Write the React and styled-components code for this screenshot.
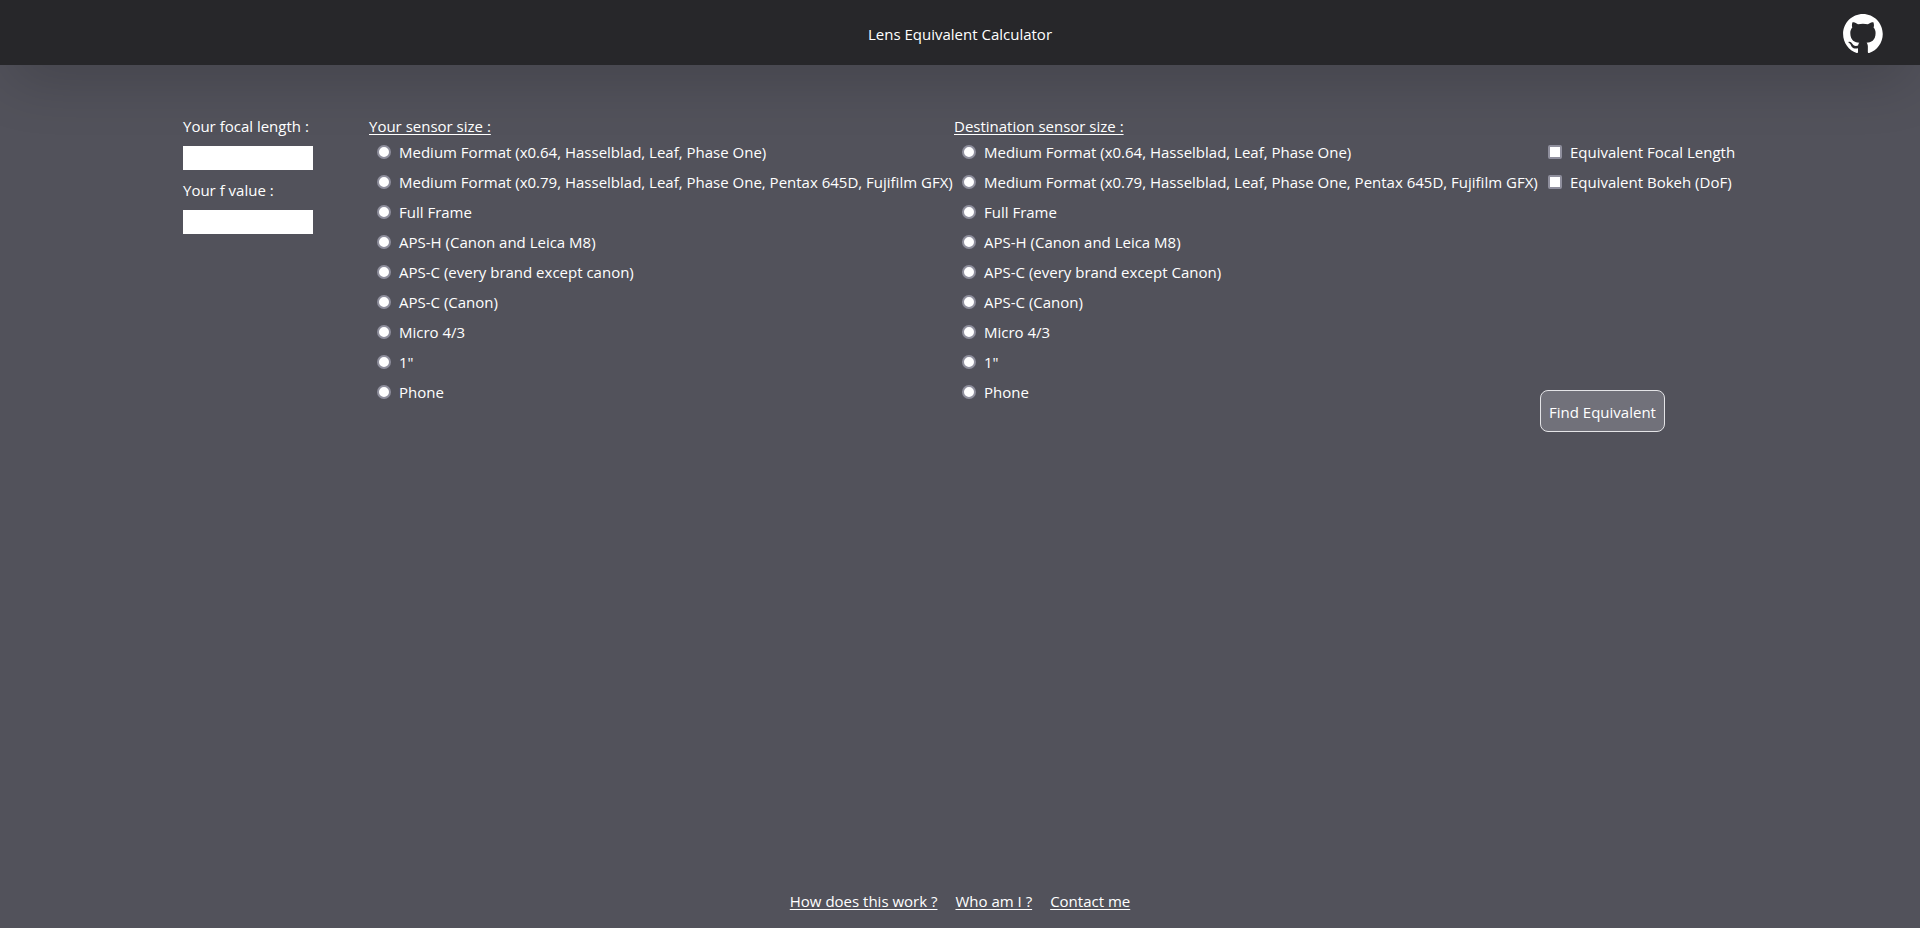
import React from "react";
import styled, { createGlobalStyle } from "styled-components";

const GlobalStyle = createGlobalStyle`
  *, *::before, *::after { box-sizing: border-box; }
  body {
    margin: 0;
    background: #52525b;
    color: #ffffff;
    font-family: "Segoe UI", "Open Sans", "Noto Sans", sans-serif;
    font-size: 15px;
    line-height: 24px;
  }
`;

const Page = styled.div`
  display: flex;
  flex-direction: column;
  min-height: 100vh;
`;

const Header = styled.header`
  display: grid;
  grid-template-columns: 1fr auto 1fr;
  align-items: center;
  height: 65px;
  padding: 2px 37px 0;
  background: #27272a;
  box-shadow: 0 20px 60px -10px rgba(0, 0, 0, 0.22);
`;

const Title = styled.h1`
  grid-column: 2;
  margin: 0;
  font-size: inherit;
  font-weight: 400;
`;

const LogoLink = styled.a`
  justify-self: end;
  display: flex;
  color: #ffffff;
`;

const Form = styled.form`
  display: flex;
  justify-content: center;
  flex: 1;
  align-items: flex-start;
  padding-top: 49px;
`;

const Columns = styled.div`
  display: grid;
  grid-template-columns: 186px 585px 586px 197px;
`;

const Fields = styled.div`
  display: flex;
  flex-direction: column;
  align-items: flex-start;
  gap: 8px;
`;

const TextInput = styled.input`
  width: 130px;
  height: 24px;
  padding: 0;
  border: 0;
  background: #ffffff;
  color: #000000;
  font: inherit;
`;

const Group = styled.fieldset`
  min-width: 0;
  margin: 0;
  padding: 0 0 24px;
  border: 0;
`;

const Legend = styled.legend`
  padding: 0;
  text-decoration: underline;
  text-underline-offset: 2px;
`;

const Option = styled.label`
  display: flex;
  align-items: center;
  gap: 8px;
  height: 30px;
  padding: 0 0 2px 8px;
  white-space: nowrap;
`;

const Tick = styled.input`
  appearance: none;
  flex: none;
  width: 14px;
  height: 14px;
  margin: 0;
  border: 2px solid #8f8f9d;
  border-radius: ${({ type }) => (type === "radio" ? "50%" : "2px")};
  background: #ffffff;

  &:checked {
    background: #0060df;
  }
`;

const Actions = styled.div`
  display: flex;
  flex-direction: column;
  align-items: flex-start;
  padding-top: 24px;
`;

const SubmitButton = styled.button`
  width: 125px;
  height: 42px;
  margin-top: auto;
  padding: 2px 0 0;
  border: 1px solid #e4e4e7;
  border-radius: 8px;
  background: #71717a;
  color: inherit;
  font: inherit;
`;

const Footer = styled.footer`
  display: flex;
  justify-content: center;
  gap: 18px;
  padding-bottom: 15px;
`;

const FooterLink = styled.a`
  color: inherit;
  text-underline-offset: 2px;
`;

const sensors = (apsc) => [
  "Medium Format (x0.64, Hasselblad, Leaf, Phase One)",
  "Medium Format (x0.79, Hasselblad, Leaf, Phase One, Pentax 645D, Fujifilm GFX)",
  "Full Frame",
  "APS-H (Canon and Leica M8)",
  apsc,
  "APS-C (Canon)",
  "Micro 4/3",
  '1"',
  "Phone",
];

function SensorGroup({ name, title, options }) {
  return (
    <Group>
      <Legend>{title}</Legend>
      {options.map((label) => (
        <Option key={label}>
          <Tick type="radio" name={name} value={label} />
          {label}
        </Option>
      ))}
    </Group>
  );
}

function GithubMark() {
  return (
    <svg width="40" height="39" viewBox="0 0 98 96" aria-hidden="true">
      <path
        fill="currentColor"
        fillRule="evenodd"
        clipRule="evenodd"
        d="M48.854 0C21.839 0 0 22 0 49.217c0 21.756 13.993 40.172 33.405 46.69 2.427.49 3.316-1.059 3.316-2.362 0-1.141-.08-5.052-.08-9.127-13.59 2.934-16.42-5.867-16.42-5.867-2.184-5.704-5.42-7.17-5.42-7.17-4.448-3.015.324-3.015.324-3.015 4.934.326 7.523 5.052 7.523 5.052 4.367 7.496 11.404 5.378 14.235 4.074.404-3.178 1.699-5.378 3.074-6.6-10.839-1.141-22.243-5.378-22.243-24.283 0-5.378 1.94-9.778 5.014-13.2-.485-1.222-2.184-6.275.486-13.038 0 0 4.125-1.304 13.426 5.052a46.97 46.97 0 0 1 12.214-1.63c4.125 0 8.33.571 12.213 1.63 9.302-6.356 13.427-5.052 13.427-5.052 2.67 6.763.97 11.816.485 13.038 3.155 3.422 5.015 7.822 5.015 13.2 0 18.905-11.404 23.06-22.324 24.283 1.78 1.548 3.316 4.481 3.316 9.126 0 6.6-.08 11.897-.08 13.526 0 1.304.89 2.853 3.316 2.364 19.412-6.52 33.405-24.935 33.405-46.691C97.707 22 75.788 0 48.854 0z"
      />
    </svg>
  );
}

export default function App() {
  return (
    <Page>
      <GlobalStyle />
      <Header>
        <Title>Lens Equivalent Calculator</Title>
        <LogoLink href="#github" aria-label="GitHub">
          <GithubMark />
        </LogoLink>
      </Header>
      <Form onSubmit={(event) => event.preventDefault()}>
        <Columns>
          <Fields>
            <label htmlFor="focal">Your focal length :</label>
            <TextInput id="focal" type="text" />
            <label htmlFor="aperture">Your f value :</label>
            <TextInput id="aperture" type="text" />
          </Fields>
          <SensorGroup
            name="source"
            title="Your sensor size :"
            options={sensors("APS-C (every brand except canon)")}
          />
          <SensorGroup
            name="destination"
            title="Destination sensor size :"
            options={sensors("APS-C (every brand except Canon)")}
          />
          <Actions>
            <Option>
              <Tick type="checkbox" name="focalEquivalent" />
              Equivalent Focal Length
            </Option>
            <Option>
              <Tick type="checkbox" name="bokehEquivalent" />
              Equivalent Bokeh (DoF)
            </Option>
            <SubmitButton type="submit">Find Equivalent</SubmitButton>
          </Actions>
        </Columns>
      </Form>
      <Footer>
        <FooterLink href="#how">How does this work ?</FooterLink>
        <FooterLink href="#who">Who am I ?</FooterLink>
        <FooterLink href="#contact">Contact me</FooterLink>
      </Footer>
    </Page>
  );
}
